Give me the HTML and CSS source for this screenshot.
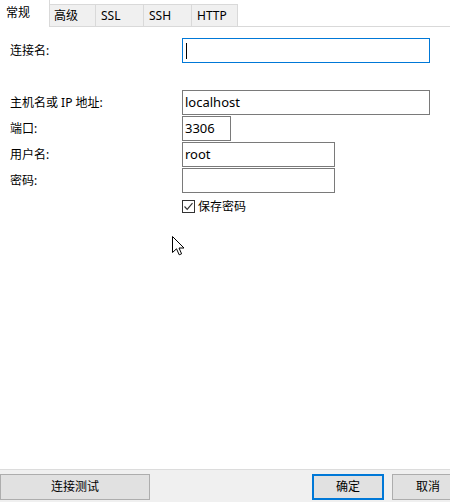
FILE: index.html
```html
<!DOCTYPE html>
<html lang="zh">
<head>
    <meta charset="UTF-8">
    <title>新建连接</title>
    <link rel="stylesheet" href="styles.css">
</head>
<body>
    <div class="window">
        <div class="tabs">
            <div class="tab active">常规</div>
            <div class="tab">高级</div>
            <div class="tab">SSL</div>
            <div class="tab">SSH</div>
            <div class="tab">HTTP</div>
        </div>

        <div class="content">
            <div class="form">
                <label class="label">连接名:</label>
                <div class="field focused wide"><span class="caret"></span></div>

                <div class="spacer"></div>

                <label class="label">主机名或 IP 地址:</label>
                <div class="field wide">localhost</div>

                <label class="label">端口:</label>
                <div class="field port">3306</div>

                <label class="label">用户名:</label>
                <div class="field mid">root</div>

                <label class="label">密码:</label>
                <div class="field mid"></div>

                <div></div>
                <label class="check">
                    <span class="box">
                        <svg width="11" height="11" viewBox="0 0 11 11">
                            <path d="M1.5 5.5 L4.2 8.3 L9.5 2.2" fill="none" stroke="#333" stroke-width="1.2"/>
                        </svg>
                    </span>
                    保存密码
                </label>
            </div>

            <svg class="cursor" width="13" height="20" viewBox="0 0 13 20">
                <path d="M0.5 0.5 L0.5 16.5 L4.5 12.8 L7.2 18.8 L9.6 17.8 L7 12 L12 12 Z" fill="#fff" stroke="#000" stroke-width="1" stroke-linejoin="miter"/>
            </svg>
        </div>

        <div class="footer">
            <button class="btn test">连接测试</button>
            <div class="actions">
                <button class="btn primary">确定</button>
                <button class="btn">取消</button>
            </div>
        </div>
    </div>
</body>
</html>
```

FILE: styles.css
```css
body {
    margin: 0;
    font-family: "Noto Sans", "Noto Sans CJK SC", sans-serif;
    font-size: 12px;
    color: #000;
    background: #fff;
    overflow: hidden;
}

.window {
    height: 502px;
    display: flex;
    flex-direction: column;
    overflow: hidden;
}

.tabs {
    display: flex;
    align-items: flex-end;
    height: 26px;
    border-bottom: 1px solid #d9d9d9;
}

.tab {
    box-sizing: border-box;
    height: 22px;
    line-height: 21px;
    padding-left: 5px;
    white-space: nowrap;
    background: #f0f0f0;
    border-top: 1px solid #d9d9d9;
    border-right: 1px solid #d9d9d9;
}

.tab:nth-child(2) { width: 46px; padding-left: 4px; }
.tab:nth-child(3) { width: 48px; }
.tab:nth-child(4) { width: 48px; }
.tab:nth-child(5) { width: 46px; }

.tab.active {
    width: 50px;
    height: 27px;
    line-height: 26px;
    padding-left: 6px;
    margin-bottom: -1px;
    background: #fff;
    border-top: none;
}

.content {
    flex: 1;
    position: relative;
}

.form {
    display: grid;
    grid-template-columns: 172px auto;
    justify-items: start;
    align-items: center;
    row-gap: 1px;
    padding: 11px 0 0 10px;
}

.label {
    line-height: 16px;
}

.spacer {
    grid-column: 1 / 3;
    height: 25px;
}

.field {
    box-sizing: border-box;
    height: 25px;
    padding: 0 2px;
    line-height: 22px;
    font-size: 13px;
    border: 1px solid #7a7a7a;
    background: #fff;
}

.field.focused {
    border-color: #0078d7;
    display: flex;
    align-items: center;
}

.caret {
    width: 1px;
    height: 16px;
    background: #000;
    margin-left: 1px;
}

.wide { width: 248px; }
.port { width: 49px; }
.mid { width: 153px; }

.check {
    display: flex;
    align-items: center;
    gap: 3px;
    margin-top: 5px;
    line-height: 15px;
}

.box {
    box-sizing: border-box;
    width: 13px;
    height: 13px;
    border: 1px solid #333;
    display: flex;
    align-items: center;
    justify-content: center;
    background: #fff;
}

.cursor {
    position: absolute;
    left: 172px;
    top: 209px;
}

.footer {
    height: 28px;
    border-top: 1px solid #dcdcdc;
    background: #f0f0f0;
    display: flex;
    justify-content: space-between;
    padding-top: 4px;
}

.actions {
    display: flex;
    gap: 8px;
    margin-right: -14px;
}

.btn {
    box-sizing: border-box;
    height: 26px;
    width: 72px;
    padding: 0;
    font-family: inherit;
    font-size: 12px;
    line-height: 22px;
    background: #e1e1e1;
    border: 1px solid #adadad;
    color: #000;
}

.btn.test {
    width: 150px;
}

.btn.primary {
    border: 2px solid #0078d7;
}
```
